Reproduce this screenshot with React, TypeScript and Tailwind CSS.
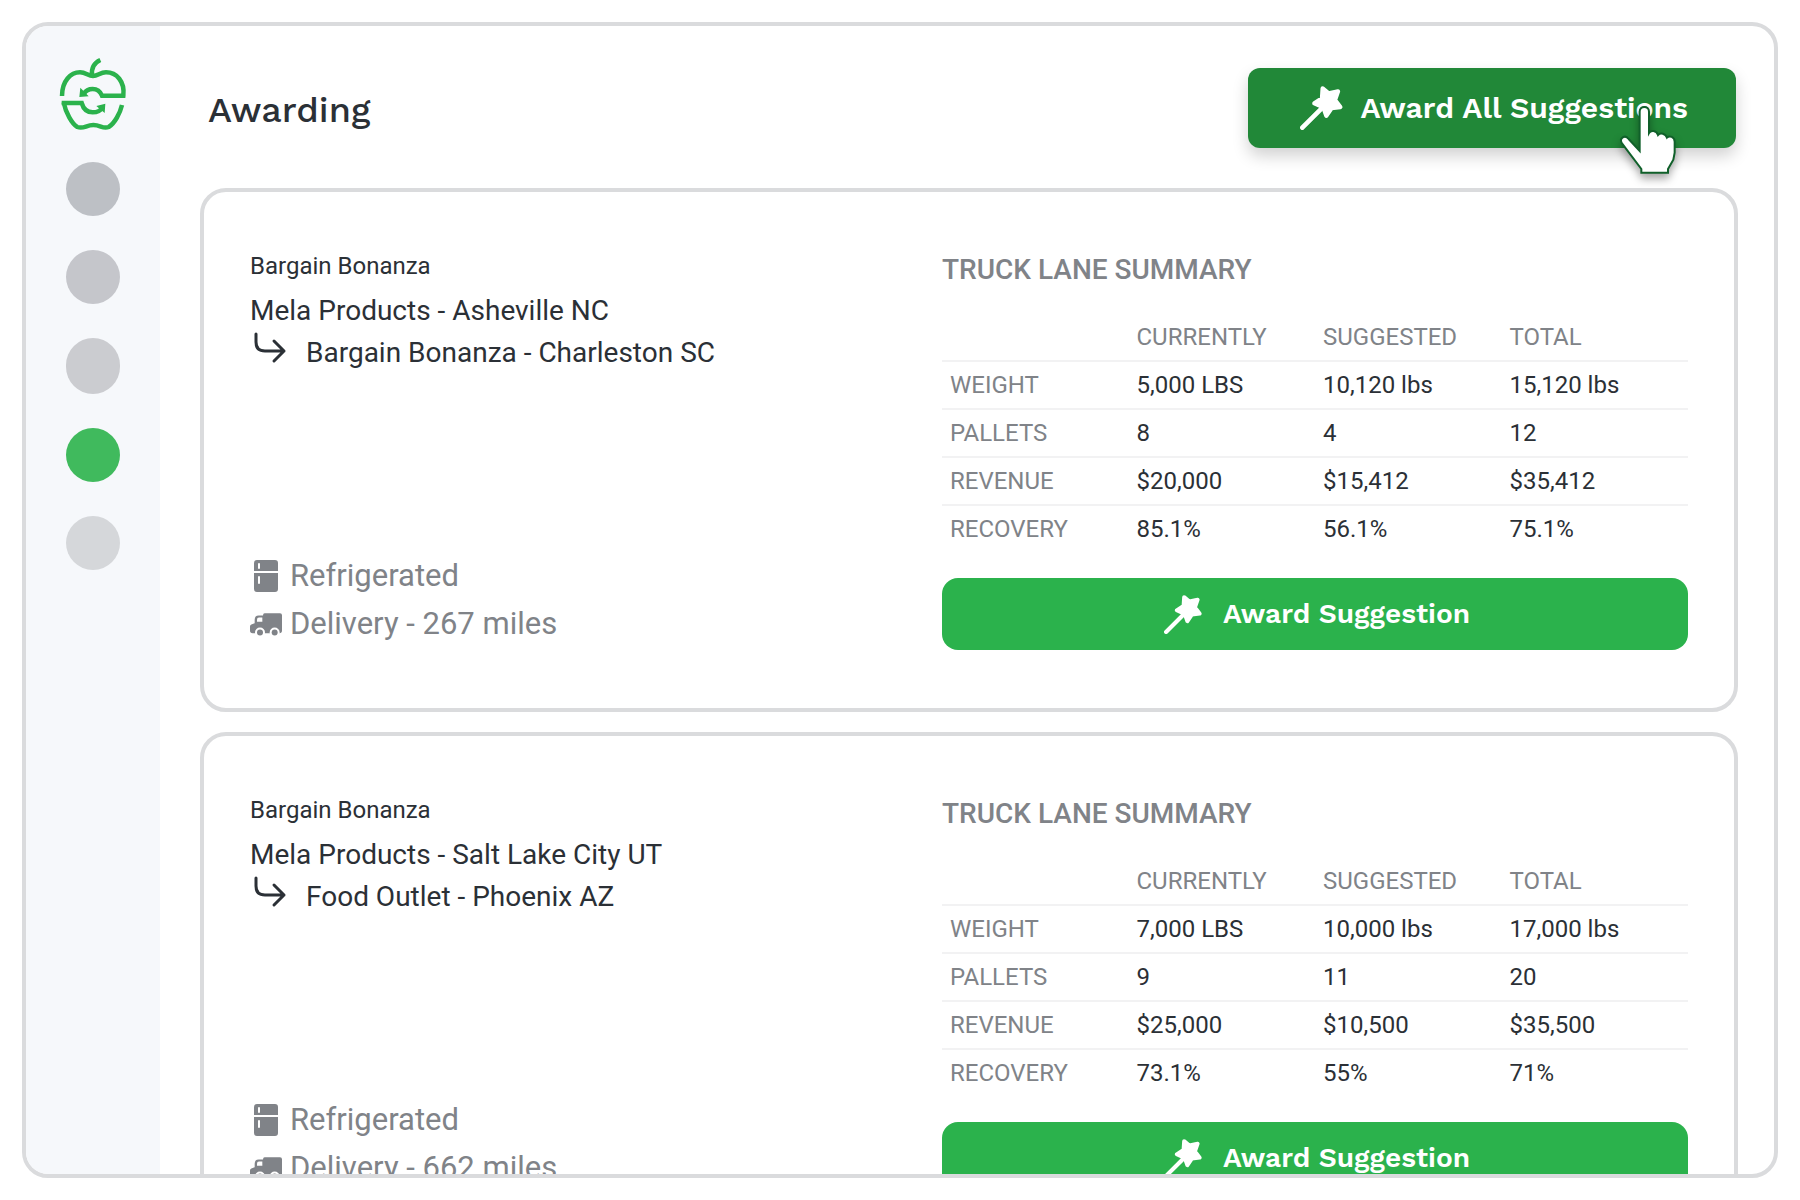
interface Lane {
  id: string;
  customer: string;
  origin: string;
  destination: string;
  storage: string;
  delivery: string;
  rows: { label: string; values: string[] }[];
}

const columns = ["CURRENTLY", "SUGGESTED", "TOTAL"];

const lanes: Lane[] = [
  {
    id: "asheville-charleston",
    customer: "Bargain Bonanza",
    origin: "Mela Products - Asheville NC",
    destination: "Bargain Bonanza - Charleston SC",
    storage: "Refrigerated",
    delivery: "Delivery - 267 miles",
    rows: [
      { label: "WEIGHT", values: ["5,000 LBS", "10,120 lbs", "15,120 lbs"] },
      { label: "PALLETS", values: ["8", "4", "12"] },
      { label: "REVENUE", values: ["$20,000", "$15,412", "$35,412"] },
      { label: "RECOVERY", values: ["85.1%", "56.1%", "75.1%"] },
    ],
  },
  {
    id: "slc-phoenix",
    customer: "Bargain Bonanza",
    origin: "Mela Products - Salt Lake City UT",
    destination: "Food Outlet - Phoenix AZ",
    storage: "Refrigerated",
    delivery: "Delivery - 662 miles",
    rows: [
      { label: "WEIGHT", values: ["7,000 LBS", "10,000 lbs", "17,000 lbs"] },
      { label: "PALLETS", values: ["9", "11", "20"] },
      { label: "REVENUE", values: ["$25,000", "$10,500", "$35,500"] },
      { label: "RECOVERY", values: ["73.1%", "55%", "71%"] },
    ],
  },
];

const navItems = [
  { label: "Dashboard", className: "h-[54px] bg-[#bdc0c5]" },
  { label: "Orders", className: "h-[54px] bg-[#c5c6cb]" },
  { label: "Inventory", className: "h-14 bg-[#cbccd0]" },
  { label: "Awarding", className: "h-[54px] bg-[#40ba5d]" },
  { label: "Settings", className: "h-[54px] bg-[#d5d7da]" },
];

function AppleLogo() {
  return (
    <svg viewBox="177 171 204 222" className="h-[74px] w-[68px]" fill="none" stroke="#2bb24c" strokeWidth="13.5">
      <path d="M186 288C186 243 212 217 240 217C258 217 264 228 279 228C294 228 300 217 318 217C350 217 375 245 370 287H306C301 275 292 267 278 267C266 267 257 272 252 281" />
      <path d="M185 309H245C250 326 262 337 278 337C291 337 302 332 308 322" />
      <path d="M191 307C197 338 216 372 232 381C251 388 258 375 280 375C302 375 309 388 326 381C344 370 360 340 366 315" />
      <path d="M276 226C274 204 283 188 301 180" />
      <path d="M241 263L238 291L266 289Z M316 311L289 318L314 339Z" fill="#2bb24c" stroke="none" />
    </svg>
  );
}

function WandIcon({ className }: { className: string }) {
  return (
    <svg viewBox="0 0 132 132" className={className} fill="#fff" stroke="#fff" strokeLinecap="round" strokeLinejoin="round">
      <path d="M7 125L62 70" strokeWidth="14" />
      <path
        d="M68 7L86 22L114 16L105 42L121 63L95 66L79 89L70 64L43 52L66 37Z"
        strokeWidth="13"
      />
    </svg>
  );
}

function HandCursor() {
  return (
    <svg
      viewBox="55 40 180 219"
      className="pointer-events-none absolute right-[58px] top-[35px] h-[73px] w-[60px] drop-shadow-[0_5px_4px_rgba(0,0,0,0.35)]"
    >
      <path
        d="M120 184V66C120 47 148 47 148 66V130C153 121 170 121 175 136C182 128 198 131 202 144C209 137 225 141 225 156V189L221 210L205 238V249H125V238L67 161C57 146 76 133 87 148Z"
        fill="#fff"
        stroke="#10602a"
        strokeWidth="6"
      />
    </svg>
  );
}

function TurnArrowIcon() {
  return (
    <svg
      viewBox="0 0 40 42"
      className="h-[42px] w-10"
      fill="none"
      stroke="#2b3036"
      strokeWidth="3"
      strokeLinecap="round"
      strokeLinejoin="round"
    >
      <path d="M6 2V10Q6 19 15 19H34M24 9L34 19L24 29" />
    </svg>
  );
}

function FridgeIcon() {
  return (
    <svg viewBox="0 0 24 32" className="h-8 w-6">
      <path d="M3 0H21Q24 0 24 3V11H0V3Q0 0 3 0ZM0 13H24V29Q24 32 21 32H3Q0 32 0 29Z" fill="#808388" />
      <path d="M5 4V8M5 17V23" stroke="#fff" strokeWidth="2" strokeLinecap="round" />
    </svg>
  );
}

function TruckIcon() {
  return (
    <svg viewBox="0 0 96 68" className="h-[23px] w-8">
      <path
        d="M44 0H90Q96 0 96 6V52Q96 60 88 60H8Q0 60 0 52V40Q0 36 4 34L14 30V20Q14 7 26 7H39Q39 0 44 0Z"
        fill="#808388"
      />
      <path d="M27 13H37V26H21V19Q21 13 27 13Z" fill="#fff" />
      <circle cx="30" cy="58" r="15" fill="#fff" />
      <circle cx="74" cy="58" r="15" fill="#fff" />
      <circle cx="30" cy="58" r="9" fill="#808388" />
      <circle cx="74" cy="58" r="9" fill="#808388" />
    </svg>
  );
}

function LaneCard({ lane }: { lane: Lane }) {
  return (
    <article className="grid grid-cols-[692fr_746fr] rounded-[26px] border-4 border-[#dadbdd] px-[46px] py-[58px]">
      <div className="flex flex-col justify-between pb-0.5">
        <div>
          <p className="text-2xl leading-8">{lane.customer}</p>
          <p className="mt-2 text-[28px] leading-[42px]">{lane.origin}</p>
          <div className="flex gap-4">
            <TurnArrowIcon />
            <p className="text-[28px] leading-[42px]">{lane.destination}</p>
          </div>
        </div>
        <ul className="text-[31px] leading-[48px] text-[#808388]">
          <li className="flex items-center gap-2">
            <span className="flex w-8 justify-center">
              <FridgeIcon />
            </span>
            {lane.storage}
          </li>
          <li className="flex items-center gap-2">
            <TruckIcon />
            {lane.delivery}
          </li>
        </ul>
      </div>

      <div>
        <h2 className="text-[28px] font-medium leading-10 text-[#808388]">TRUCK LANE SUMMARY</h2>
        <table className="mt-6 w-full table-fixed border-separate border-spacing-0 text-left text-2xl">
          <thead>
            <tr className="h-12 text-[#808388]">
              <td className="border-b-2 border-[#f2f2f3] px-2" />
              {columns.map((column) => (
                <th key={column} scope="col" className="border-b-2 border-[#f2f2f3] px-2 font-normal">
                  {column}
                </th>
              ))}
            </tr>
          </thead>
          <tbody>
            {lane.rows.map((row) => (
              <tr key={row.label} className="group h-12">
                <th
                  scope="row"
                  className="border-b-2 border-[#f2f2f3] px-2 font-normal text-[#808388] group-last:border-transparent"
                >
                  {row.label}
                </th>
                {row.values.map((value, i) => (
                  <td key={i} className="border-b-2 border-[#f2f2f3] px-2 group-last:border-transparent">
                    {value}
                  </td>
                ))}
              </tr>
            ))}
          </tbody>
        </table>
        <button
          type="button"
          className="mt-6 flex h-[72px] w-full items-center justify-center gap-5 rounded-2xl bg-[#2bb24c] pl-1 font-['Work_Sans','Inter',sans-serif] text-[28px] font-semibold text-white"
        >
          <WandIcon className="h-[39px] w-[39px]" />
          Award Suggestion
        </button>
      </div>
    </article>
  );
}

export default function App() {
  return (
    <div className="h-screen bg-white p-[22px] font-['Roboto',sans-serif] text-[#2b3036]">
      <div className="flex h-full overflow-hidden rounded-[26px] border-4 border-[#dadbdd]">
        <nav className="flex w-[134px] shrink-0 flex-col items-center bg-[#f6f8fb] pt-[31px]">
          <AppleLogo />
          <div className="mt-[31px] flex flex-col gap-[34px]">
            {navItems.map((item) => (
              <a key={item.label} href="#" aria-label={item.label} className={`block w-[54px] rounded-full ${item.className}`} />
            ))}
          </div>
        </nav>

        <main className="min-w-0 flex-1 pl-10 pr-9 pt-[42px]">
          <header className="flex items-center justify-between">
            <h1 className="pl-2 pt-1 font-['Work_Sans','Inter',sans-serif] text-4xl font-medium">Awarding</h1>
            <div className="relative mr-[2px]">
              <button
                type="button"
                className="flex h-20 items-center gap-4 rounded-xl bg-[#218838] pl-[52px] pr-12 font-['Work_Sans','Inter',sans-serif] text-3xl font-semibold text-white shadow-[0_8px_16px_rgba(0,0,0,0.18)]"
              >
                <WandIcon className="h-11 w-11" />
                Award All Suggestions
              </button>
              <HandCursor />
            </div>
          </header>

          <div className="mt-10 flex flex-col gap-5">
            {lanes.map((lane) => (
              <LaneCard key={lane.id} lane={lane} />
            ))}
          </div>
        </main>
      </div>
    </div>
  );
}
